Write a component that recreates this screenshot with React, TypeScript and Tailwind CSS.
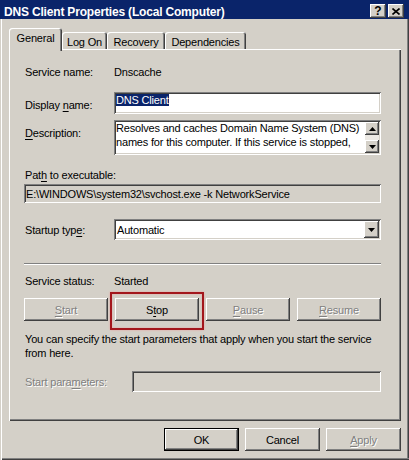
import React from "react";

const raised =
  "shadow-[inset_-1px_-1px_#404040,inset_1px_1px_#ffffff,inset_-2px_-2px_#808080,inset_2px_2px_#d4d0c8]";
const sunken =
  "shadow-[inset_1px_1px_#808080,inset_-1px_-1px_#ffffff,inset_2px_2px_#404040,inset_-2px_-2px_#d4d0c8]";
const dis = "text-[#808080] [text-shadow:1px_1px_0_#ffffff]";

function U({ children }: { children: React.ReactNode }) {
  return <span className="underline underline-offset-[2px] decoration-[1px]">{children}</span>;
}

function Arrow({ up }: { up?: boolean }) {
  return (
    <svg width="7" height="4" viewBox="0 0 7 4" className="block">
      {up ? <polygon points="3.5,0 7,4 0,4" fill="#000" /> : <polygon points="0,0 7,0 3.5,4" fill="#000" />}
    </svg>
  );
}

function Btn({
  children,
  disabled,
  className = "",
}: {
  children: React.ReactNode;
  disabled?: boolean;
  className?: string;
}) {
  return (
    <div
      className={`h-[23px] bg-[#d4d0c8] ${raised} flex items-center justify-center ${disabled ? dis : ""} ${className}`}
    >
      {children}
    </div>
  );
}

export default function App() {
  return (
    <div className="w-[409px] h-[460px] bg-[#d4d0c8] flex flex-col overflow-hidden font-['Liberation_Sans',Arial,sans-serif] text-[11px] leading-[14px] tracking-[-0.18px] text-black">
      {/* Title bar */}
      <div className="h-[19px] shrink-0 bg-[#0a246a] flex items-start pl-[4px] pr-[5px]">
        <div className="flex-1 pt-[5px] text-white font-bold text-[12px] leading-[14px] whitespace-nowrap">
          DNS Client Properties (Local Computer)
        </div>
        <div className="flex gap-[2px] pt-[4px]">
          <div className={`w-[16px] h-[14px] bg-[#d4d0c8] ${raised} flex items-center justify-center font-bold text-[12px] leading-[12px] tracking-normal`}>
            ?
          </div>
          <div className={`w-[16px] h-[14px] bg-[#d4d0c8] ${raised} flex items-center justify-center`}>
            <svg width="8" height="7" viewBox="0 0 8 7" className="block">
              <path d="M0.5 0.5 L7.5 6.5 M7.5 0.5 L0.5 6.5" stroke="#000" strokeWidth="1.6" />
            </svg>
          </div>
        </div>
      </div>

      {/* Body */}
      <div className="flex-1 flex flex-col pl-[9px] pt-[9px] shadow-[inset_1px_0_#d4d0c8,inset_2px_0_#ffffff,inset_0_-1px_#404040,inset_0_-2px_#808080,inset_-1px_0_#404040,inset_-2px_0_#808080]">
        {/* Tabs */}
        <div className="flex items-end h-[21px]">
          <div className="relative z-10 w-[53px] h-[23px] -mb-[2px] bg-[#d4d0c8] rounded-t-[3px] shadow-[inset_1px_1px_#ffffff,inset_-1px_0_#404040,inset_-2px_0_#808080] flex justify-center pt-[3px]">
            General
          </div>
          <div className="w-[45px] h-[17px] rounded-t-[3px] shadow-[inset_1px_1px_#ffffff,inset_-1px_0_#404040,inset_-2px_0_#808080] flex justify-center pt-[3px]">
            Log On
          </div>
          <div className="w-[58px] h-[17px] rounded-t-[3px] shadow-[inset_1px_1px_#ffffff,inset_-1px_0_#404040,inset_-2px_0_#808080] flex justify-center pt-[3px]">
            Recovery
          </div>
          <div className="w-[81px] h-[17px] rounded-t-[3px] shadow-[inset_1px_1px_#ffffff,inset_-1px_0_#404040,inset_-2px_0_#808080] flex justify-center pt-[3px]">
            Dependencies
          </div>
        </div>

        {/* Panel */}
        <div className="w-[392px] h-[372px] shrink-0 flex flex-col pl-[15px] pr-[20px] pt-[16px] shadow-[inset_1px_1px_#ffffff,inset_-1px_-1px_#404040,inset_-2px_-2px_#808080]">
          <div className="flex">
            <div className="w-[90px] pl-[1px]">Service name:</div>
            <div>Dnscache</div>
          </div>

          <div className="flex mt-[13px]">
            <div className="w-[90px] pl-[1px] pt-[6px]">
              Display <U>n</U>ame:
            </div>
            <div className={`flex-1 h-[22px] bg-white ${sunken} pl-[2px] pt-[1px]`}>
              <span className="bg-[#0a246a] text-white">DNS Client</span>
            </div>
          </div>

          <div className="flex mt-[6px]">
            <div className="w-[90px] pl-[1px] pt-[6px]">
              <U>D</U>escription:
            </div>
            <div className={`flex-1 h-[35px] bg-white ${sunken} flex`}>
              <div className="flex-1 pl-[2px] pt-[1px]">
                Resolves and caches Domain Name System (DNS) names for this computer. If this service is stopped,
              </div>
              <div className="w-[14px] mr-[2px] my-[2px] flex flex-col justify-between bg-[#ece9e4]">
                <div className={`h-[13px] bg-[#d4d0c8] ${raised} flex items-center justify-center`}>
                  <Arrow up />
                </div>
                <div className={`h-[13px] bg-[#d4d0c8] ${raised} flex items-center justify-center`}>
                  <Arrow />
                </div>
              </div>
            </div>
          </div>

          <div className="mt-[13px] pl-[1px]">
            Pat<U>h</U> to executable:
          </div>
          <div className={`mt-[2px] h-[19px] bg-[#d4d0c8] ${sunken} flex items-center pl-[2px] whitespace-nowrap`}>
            E:\WINDOWS\system32\svchost.exe -k NetworkService
          </div>

          <div className="flex mt-[16px]">
            <div className="w-[90px] pl-[1px] pt-[4px]">
              Startup typ<U>e</U>:
            </div>
            <div className={`flex-1 h-[21px] bg-white ${sunken} flex items-center pl-[3px]`}>
              <div className="flex-1">Automatic</div>
              <div className={`w-[15px] h-[17px] mr-[2px] bg-[#d4d0c8] ${raised} flex items-center justify-center`}>
                <Arrow />
              </div>
            </div>
          </div>

          <div className="mt-[23px] h-[2px] border-t border-t-[#808080] border-b border-b-white" />

          <div className="flex mt-[9px]">
            <div className="w-[90px] pl-[1px]">Service status:</div>
            <div>Started</div>
          </div>

          <div className="flex justify-between mt-[10px]">
            <Btn disabled className="w-[84px]">
              <U>S</U>tart
            </Btn>
            <div className="relative w-[84px]">
              <Btn className="w-[84px]">
                S<U>t</U>op
              </Btn>
              <div className="absolute -left-[5px] -top-[6px] w-[94px] h-[38px] border-2 border-[#a3161c] shadow-[0_0_2px_#e6a0a0,inset_0_0_2px_#e6a0a0] pointer-events-none" />
            </div>
            <Btn disabled className="w-[84px]">
              <U>P</U>ause
            </Btn>
            <Btn disabled className="w-[84px]">
              <U>R</U>esume
            </Btn>
          </div>

          <div className="mt-[11px] pl-[1px]">
            You can specify the start parameters that apply when you start the service from here.
          </div>

          <div className="flex mt-[11px]">
            <div className={`w-[108px] pl-[1px] pt-[4px] ${dis}`}>
              Start para<U>m</U>eters:
            </div>
            <div className={`flex-1 h-[21px] bg-[#d4d0c8] ${sunken}`} />
          </div>
        </div>

        {/* Bottom buttons */}
        <div className="flex mt-[7px] pl-[155px] gap-[6px]">
          <div className="w-[75px] h-[23px] bg-[#d4d0c8] shadow-[inset_0_0_0_1px_#000000,inset_-2px_-2px_#404040,inset_2px_2px_#ffffff,inset_-3px_-3px_#808080] flex items-center justify-center">
            OK
          </div>
          <Btn className="w-[75px]">Cancel</Btn>
          <Btn disabled className="w-[75px]">
            <U>A</U>pply
          </Btn>
        </div>
      </div>
    </div>
  );
}
